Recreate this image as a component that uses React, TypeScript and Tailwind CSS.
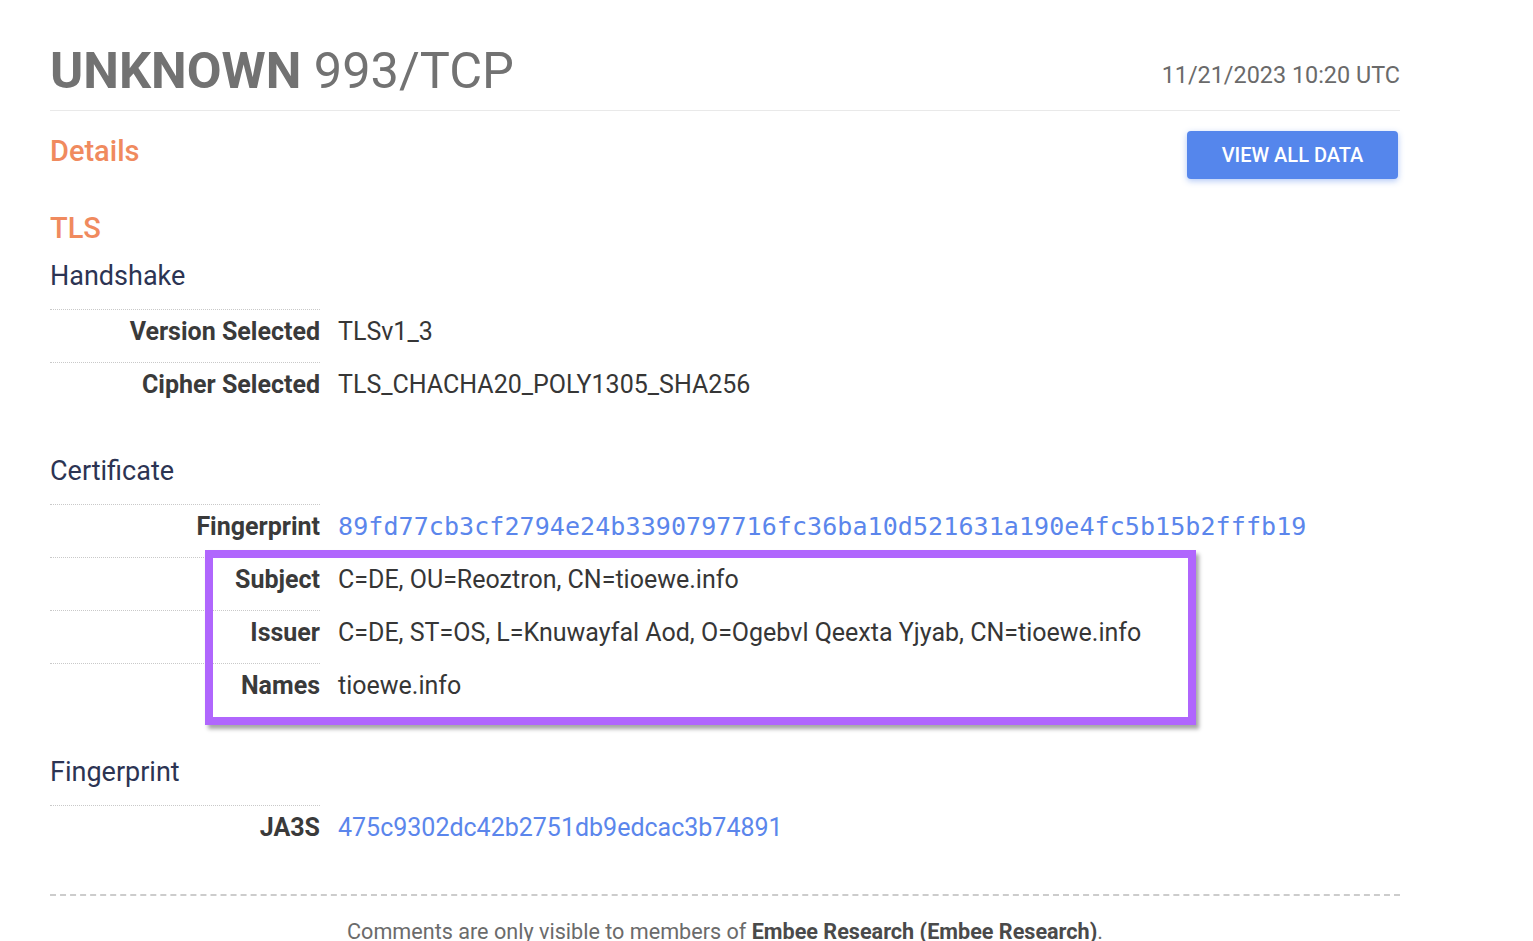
import React from 'react';

interface Row {
  label: string;
  value: string;
  kind?: 'text' | 'link' | 'mono';
}

const handshakeRows: Row[] = [
  { label: 'Version Selected', value: 'TLSv1_3' },
  { label: 'Cipher Selected', value: 'TLS_CHACHA20_POLY1305_SHA256' },
];

const certificateRows: Row[] = [
  {
    label: 'Fingerprint',
    value: '89fd77cb3cf2794e24b3390797716fc36ba10d521631a190e4fc5b15b2fffb19',
    kind: 'mono',
  },
  { label: 'Subject', value: 'C=DE, OU=Reoztron, CN=tioewe.info' },
  { label: 'Issuer', value: 'C=DE, ST=OS, L=Knuwayfal Aod, O=Ogebvl Qeexta Yjyab, CN=tioewe.info' },
  { label: 'Names', value: 'tioewe.info' },
];

const fingerprintRows: Row[] = [
  { label: 'JA3S', value: '475c9302dc42b2751db9edcac3b74891', kind: 'link' },
];

const valueClass = (kind: Row['kind']) => {
  if (kind === 'mono') return "text-[#5b86ec] font-['DejaVu_Sans_Mono',monospace] tracking-[0.08px]";
  if (kind === 'link') return 'text-[#5b86ec]';
  return 'text-[#363636]';
};

const DataTable: React.FC<{ rows: Row[] }> = ({ rows }) => (
  <div className="flex flex-col">
    {rows.map((row) => (
      <div key={row.label} className="flex text-[25px] leading-[30px]">
        <div className="w-[270px] shrink-0 border-t border-dotted border-[#c9c9c9] pt-[7px] pb-[15px] text-right font-bold text-[#3a3a3a]">
          {row.label}
        </div>
        <div className={`border-t border-transparent pl-[18px] pt-[7px] whitespace-nowrap ${valueClass(row.kind)}`}>
          {row.value}
        </div>
      </div>
    ))}
  </div>
);

const SubHeading: React.FC<{ children: React.ReactNode }> = ({ children }) => (
  <h3 className="text-[27px] leading-[32px] text-[#2c3453] mb-[17px]">{children}</h3>
);

export default function App() {
  return (
    <div className="min-h-screen bg-white font-[Roboto,Arial,sans-serif] overflow-hidden">
      <div className="ml-[50px] w-[1350px] pt-[41px]">
        {/* Title */}
        <div className="flex items-center justify-between pb-[9px] border-b border-[#e9e9e9]">
          <h1 className="text-[50.5px] leading-[60px] text-[#727272]">
            <span className="font-bold">UNKNOWN</span> 993/TCP
          </h1>
          <div className="mt-[8px] text-[23.4px] leading-[30px] text-[#6a6a6a]">11/21/2023 10:20 UTC</div>
        </div>

        {/* Details row */}
        <div className="flex items-start justify-between pt-[20px]">
          <h2 className="mt-[3px] text-[29px] leading-[34px] font-medium text-[#f08a5e]">Details</h2>
          <button className="mr-[2px] h-[48px] w-[211px] rounded-[4px] bg-[#5586ec] text-[20px] font-medium text-white shadow-[0_2px_6px_rgba(85,134,236,0.45)]">
            VIEW ALL DATA
          </button>
        </div>

        {/* TLS */}
        <h2 className="mt-[32px] text-[29px] leading-[34px] font-medium text-[#f08a5e]">TLS</h2>
        <div className="mt-[15px]">
          <SubHeading>Handshake</SubHeading>
          <DataTable rows={handshakeRows} />
        </div>

        <div className="mt-[40px]">
          <SubHeading>Certificate</SubHeading>
          <div className="relative">
            <DataTable rows={certificateRows} />
            {/* highlight annotation */}
            <div className="absolute left-[155px] top-[46px] h-[175px] w-[991px] border-[8px] border-[#b066fd] shadow-[3px_4px_4px_rgba(0,0,0,0.35)]" />
          </div>
        </div>

        <div className="mt-[40px]">
          <SubHeading>Fingerprint</SubHeading>
          <DataTable rows={fingerprintRows} />
        </div>

        {/* Comments */}
        <div className="mt-[36px] border-t-2 border-dashed border-[#cccccc] pt-[22px] text-center text-[21.6px] leading-[28px] text-[#6b6b6b]">
          Comments are only visible to members of{' '}
          <span className="font-bold text-[#4a4a4a]">Embee Research (Embee Research)</span>.
        </div>
      </div>
    </div>
  );
}
